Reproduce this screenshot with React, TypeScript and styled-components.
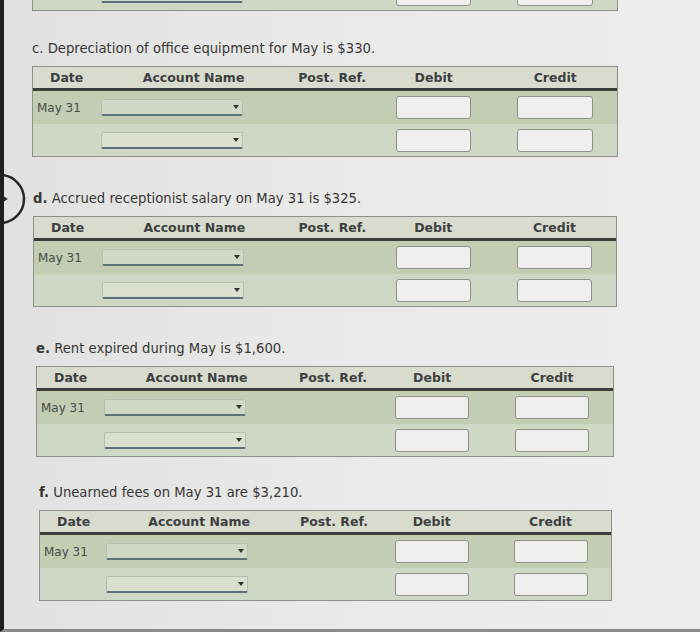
import React from "react";
import styled, { createGlobalStyle } from "styled-components";

const GlobalStyle = createGlobalStyle`
  html, body {
    margin: 0;
    padding: 0;
    background: #e6e6e4;
  }
  body {
    font-family: "DejaVu Sans", Verdana, sans-serif;
  }
`;

const COLS =
  "minmax(0,66fr) minmax(0,166fr) minmax(0,132fr) minmax(0,76fr) minmax(0,46fr) minmax(0,76fr) minmax(0,24fr)";

const Screen = styled.div`
  position: relative;
  width: 700px;
  height: 632px;
  box-sizing: border-box;
  overflow: hidden;
  background: linear-gradient(90deg, #e1e1df 0%, #e9e9e7 45%, #ededeb 100%);
  border-left: 4px solid #1f1f1f;
  border-bottom: 3px solid #8a8a88;
  display: flex;
  flex-direction: column;
`;

const Clip = styled.div`
  height: 11px;
  overflow: hidden;
  display: flex;
  flex-direction: column;
  justify-content: flex-end;
  margin-left: 28px;
  width: 586px;
`;

const Section = styled.section<{ $left: number; $width: number; $top: number }>`
  margin-left: ${(p) => p.$left - 4}px;
  width: ${(p) => p.$width}px;
  margin-top: ${(p) => p.$top}px;
  display: flex;
  flex-direction: column;
  gap: 9px;
`;

const Title = styled.p`
  margin: 0;
  font-size: 13.2px;
  line-height: 16px;
  color: #363636;
  white-space: nowrap;
  b {
    font-weight: 700;
  }
`;

const Table = styled.div`
  border: 1px solid #8b9089;
  display: flex;
  flex-direction: column;
`;

const HeaderRow = styled.div`
  display: grid;
  grid-template-columns: ${COLS};
  height: 21px;
  align-items: center;
  background: #d7dccf;
  border-bottom: 3px solid #3a3f3a;
`;

const HeadCell = styled.div<{ $align?: "left" | "center"; $pad?: number }>`
  font-size: 12.5px;
  font-weight: 700;
  color: #3e3f3e;
  white-space: nowrap;
  text-align: ${(p) => p.$align ?? "center"};
  padding-left: ${(p) => p.$pad ?? 0}px;
`;

const Row = styled.div<{ $tone: "dark" | "light" }>`
  display: grid;
  grid-template-columns: ${COLS};
  height: ${(p) => (p.$tone === "dark" ? 33 : 32)}px;
  align-items: center;
  background: ${(p) => (p.$tone === "dark" ? "#c2cdb4" : "#cfd8c4")};
`;

const DateCell = styled.div`
  font-size: 12px;
  color: #474a47;
  padding-left: 4px;
  white-space: nowrap;
`;

const SelectBox = styled.div`
  position: relative;
  margin-left: 2px;
  width: 142px;
  height: 17px;
  box-sizing: border-box;
  border: 1px solid #b7bfb0;
  border-bottom: 2px solid #5d717a;
  border-radius: 2px;
  background: rgba(236, 240, 232, 0.35);
  &::after {
    content: "";
    position: absolute;
    right: 3px;
    top: 5px;
    border-left: 3px solid transparent;
    border-right: 3px solid transparent;
    border-top: 4px solid #2f3230;
  }
`;

const Entry = styled.div`
  height: 23px;
  box-sizing: border-box;
  border: 1.5px solid #8d928b;
  border-radius: 3px;
  background: #eff0ee;
`;

const Empty = styled.div``;

const NavCircle = styled.svg`
  position: absolute;
  left: -4px;
  top: 172px;
`;

function EntryRow({ tone, date }: { tone: "dark" | "light"; date?: string }) {
  return (
    <Row $tone={tone}>
      <DateCell>{date}</DateCell>
      <div>
        <SelectBox />
      </div>
      <Empty />
      <Entry />
      <Empty />
      <Entry />
      <Empty />
    </Row>
  );
}

function Journal() {
  return (
    <Table>
      <HeaderRow>
        <HeadCell $align="left" $pad={17}>Date</HeadCell>
        <HeadCell $align="left" $pad={44}>Account Name</HeadCell>
        <HeadCell $align="left" $pad={34}>Post. Ref.</HeadCell>
        <HeadCell>Debit</HeadCell>
        <Empty />
        <HeadCell>Credit</HeadCell>
        <Empty />
      </HeaderRow>
      <EntryRow tone="dark" date="May 31" />
      <EntryRow tone="light" />
    </Table>
  );
}

const sections = [
  { key: "c", text: "Depreciation of office equipment for May is $330.", left: 32, width: 586, top: 30, bold: false },
  { key: "d", text: "Accrued receptionist salary on May 31 is $325.", left: 33, width: 584, top: 34, bold: true },
  { key: "e", text: "Rent expired during May is $1,600.", left: 36, width: 578, top: 34, bold: true },
  { key: "f", text: "Unearned fees on May 31 are $3,210.", left: 39, width: 573, top: 28, bold: true },
];

export default function App() {
  return (
    <>
      <GlobalStyle />
      <Screen>
        <Clip>
          <Table>
            <EntryRow tone="light" />
          </Table>
        </Clip>
        {sections.map((s) => (
          <Section key={s.key} $left={s.left} $width={s.width} $top={s.top}>
            <Title>
              {s.bold ? <b>{s.key}.</b> : <span>{s.key}.</span>} {s.text}
            </Title>
            <Journal />
          </Section>
        ))}
        <NavCircle width="32" height="56" viewBox="0 0 32 56">
          <circle cx="0" cy="27" r="24" fill="none" stroke="#262626" strokeWidth="2.5" />
          <path d="M0 23 L6 27 L0 31" fill="none" stroke="#262626" strokeWidth="2" />
        </NavCircle>
      </Screen>
    </>
  );
}
